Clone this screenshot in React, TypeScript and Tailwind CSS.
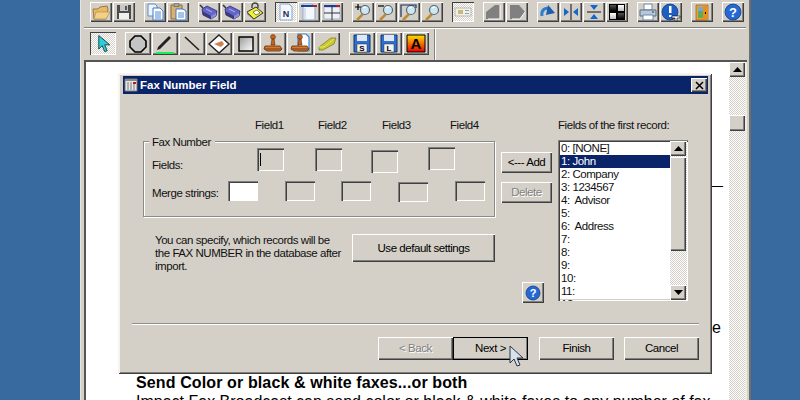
import React from 'react';

const FONT = "font-['Liberation_Sans',Arial,sans-serif]";
const RAISED = 'shadow-[inset_1px_1px_0_#fff,inset_-1px_-1px_0_#404040,inset_-2px_-2px_0_#808080]';
const SUNKEN = 'shadow-[inset_1px_1px_0_#808080,inset_2px_2px_0_#404040,inset_-1px_-1px_0_#fff]';
const DITHER = 'bg-[repeating-conic-gradient(#d4d0c8_0_25%,#ffffff_0_50%)] bg-[length:2px_2px]';

function Ico({ children, w = 22, h = 20 }: { children: React.ReactNode; w?: number; h?: number }) {
  return (
    <svg width={w} height={h} viewBox={`0 0 ${w} ${h}`} className="block">
      {children}
    </svg>
  );
}

function ToolBtn({ children, pressed, wide }: { children: React.ReactNode; pressed?: boolean; wide?: boolean }) {
  const size = wide ? 'w-[26px] h-[23px]' : 'w-[22px] h-[20px]';
  return (
    <div className={`${size} shrink-0 flex items-center justify-center ${pressed ? `${DITHER} shadow-[inset_1px_1px_0_#404040,inset_-1px_-1px_0_#fff]` : `bg-[#d4d0c8] ${RAISED}`}`}>
      {children}
    </div>
  );
}

const Magnifier = ({ sign }: { sign?: '+' | '-' | 'fit' }) => (
  <Ico>
    <path d="M11 12l-6 6" stroke="#c08a30" strokeWidth="2.5" />
    <circle cx="13" cy="8" r="4.500" fill="#cfe6f0" stroke="#4d6b78" strokeWidth="1.2" />
    <path d="M11 6l3-1" stroke="#fff" strokeWidth="1.2" />
    {sign === '+' && <path d="M3 5h6M6 2v6" stroke="#000" strokeWidth="1.2" />}
    {sign === '-' && <path d="M3 4h6" stroke="#000" strokeWidth="1.2" />}
    {sign === 'fit' && <path d="M3 15V3h15v3" fill="none" stroke="#1c2f60" strokeWidth="1.2" />}
  </Ico>
);

const Modem = () => (
  <Ico>
    <path d="M2 3l3 3" stroke="#333" strokeWidth="1.5" />
    <path d="M4 7l5-3 10 5-1 5-5 3-8-4z" fill="#6464c8" stroke="#2a2a66" strokeWidth="0.8" />
    <path d="M5 13l8 4v-3L4 9z" fill="#3a3a78" />
    <path d="M13 17l5-3v-3l-5 3z" fill="#8a8ad8" />
    <path d="M8 7l6 3" stroke="#b4b4ee" />
  </Ico>
);

const Page = ({ children }: { children?: React.ReactNode }) => (
  <Ico>
    <path d="M5 2h9l3 3v13H5z" fill="#f4f8fc" stroke="#8aa6c8" />
    {children}
  </Ico>
);

const Stamp = ({ page }: { page?: boolean }) => (
  <Ico w={26} h={23}>
    {page && <path d="M11 2h8l3 3v14H11z" fill="#fff" stroke="#3f86d8" strokeWidth="1.2" />}
    <circle cx="13" cy="5" r="2.400" fill="#c8641c" stroke="#5a2a08" strokeWidth="0.6" />
    <path d="M12 7h2l1 6h-4z" fill="#c8641c" stroke="#5a2a08" strokeWidth="0.6" />
    <path d="M5 14h15l2 3-2 2H7l-3-2z" fill="#d9792c" stroke="#5a2a08" strokeWidth="0.8" />
    <path d="M5 17h16" stroke="#7a3a10" />
  </Ico>
);

const Floppy = ({ letter }: { letter: string }) => (
  <Ico w={26} h={23}>
    <path d="M5 3h16v17H5z" fill="#2f6fd0" stroke="#14345f" />
    <path d="M8 3h10v6H8z" fill="#dfe8f4" />
    <path d="M8 12h10v8H8z" fill="#f4f4f4" stroke="#333" strokeWidth="0.5" />
    <text x="13" y="19" textAnchor="middle" fontSize="8" fontWeight="700" fontFamily="Liberation Sans" fill="#000">{letter}</text>
  </Ico>
);

const groupsTop: React.ReactNode[][] = [
  [
    <Ico key="open"><path d="M4 17l-1-10h5l2-2 7-1 1 3-2 10z" fill="#eab968" stroke="#9a7a40" /><path d="M4 17l2-7h14l-4 7z" fill="#f4cf88" stroke="#a8864c" strokeWidth="0.6" /></Ico>,
    <Ico key="save"><path d="M4 3h14v14H4z" fill="#4c4c4c" /><path d="M7 3h8v6H7z" fill="#c8c8c8" /><path d="M6 11h10v6H6z" fill="#efefef" /><path d="M12 4h2v4h-2z" fill="#555" /></Ico>,
  ],
  [
    <Ico key="copy"><path d="M4 2h7l2 2v10H4z" fill="#eef4fb" stroke="#5c8ecc" /><path d="M9 6h7l3 3v9H9z" fill="#fff" stroke="#3f78c4" /><path d="M11 10h6M11 12h6M11 14h6M11 16h6" stroke="#4d86d0" /></Ico>,
    <Ico key="paste"><path d="M4 3h11v14H4z" fill="#d8b070" stroke="#8a6a38" /><path d="M7 1.500h5v3H7z" fill="#a8a8a8" stroke="#555" strokeWidth="0.6" /><path d="M9 7h7l3 2v9H9z" fill="#fff" stroke="#3f78c4" /><path d="M11 11h6M11 13h6M11 15h6" stroke="#4d86d0" /></Ico>,
  ],
  [
    <Modem key="m1" />,
    <Modem key="m2" />,
    <Ico key="m3"><path d="M8 6V4a3 3 0 016 0v2" fill="none" stroke="#444" strokeWidth="1.4" /><path d="M3 10l9-5 7 6-9 6z" fill="#eef030" stroke="#333" /><path d="M9 10l4-2 3 3-4 2z" fill="#fff" stroke="#333" strokeWidth="0.6" /><path d="M3 10v2l7 6v-1z" fill="#777" /></Ico>,
  ],
  [
    <Page key="n"><text x="11" y="15" textAnchor="middle" fontSize="9" fontWeight="700" fontFamily="Liberation Sans" fill="#1c2f60">N</text></Page>,
    <Page key="hdr"><path d="M3 3h16v2H3z" fill="#1c3fa0" /><path d="M15 3h4v2h-4z" fill="#b02020" /><path d="M7 6v11" stroke="#b8c4d4" /></Page>,
    <Ico key="grid"><path d="M3 5h16v12H3z" fill="#eef2f8" stroke="#a8b4c4" /><path d="M3 3h16v2H3z" fill="#1c3fa0" /><path d="M15 3h4v2h-4z" fill="#b02020" /><path d="M11 3v15M3 11h16" stroke="#333" /></Ico>,
  ],
  [<Magnifier key="z1" sign="+" />, <Magnifier key="z2" sign="-" />, <Magnifier key="z3" sign="fit" />, <Magnifier key="z4" />],
  [<Ico key="pic"><path d="M3 6h16v8H3z" fill="#f0f0e4" stroke="#999" strokeWidth="0.6" /><path d="M6 8h5v4H6z" fill="#c8b880" /><path d="M13 8h4v1h-4zM13 11h4v1h-4z" fill="#8c9cc0" /></Ico>],
  [
    <Ico key="p1"><path d="M3 10l9-7h5v14H3z" fill="#808080" /><path d="M17 3v14H5" fill="none" stroke="#fff" /></Ico>,
    <Ico key="p2"><path d="M4 3h9l6 7-5 7H4z" fill="#808080" /><path d="M19 10l-5 7H6" fill="none" stroke="#fff" /></Ico>,
  ],
  [
    <Ico key="redo"><path d="M5 14c-1-6 3-9 8-7" fill="none" stroke="#2d7fd0" strokeWidth="3" /><path d="M11 3l7 8-9 2z" fill="#1d5fb0" /></Ico>,
    <Ico key="hflip"><path d="M11 2v16" stroke="#111" /><path d="M9 10L4 6v8zM13 10l5-4v8z" fill="#1668c8" /></Ico>,
    <Ico key="vflip"><path d="M4 10h14" stroke="#111" /><path d="M11 8L7 3h8zM11 12l-4 5h8z" fill="#1668c8" /></Ico>,
    <Ico key="tile">
      <defs>
        <linearGradient id="tileA" x1="0" y1="0" x2="0" y2="1"><stop offset="0" stopColor="#555" /><stop offset="1" stopColor="#000" /></linearGradient>
        <linearGradient id="tileB" x1="0" y1="0" x2="0" y2="1"><stop offset="0" stopColor="#fff" /><stop offset="1" stopColor="#bbb" /></linearGradient>
      </defs>
      <path d="M3 2h16v16H3z" fill="#000" />
      <path d="M4 3h6v6H4z" fill="url(#tileA)" /><path d="M12 3h6v6h-6z" fill="url(#tileB)" />
      <path d="M4 11h6v6H4z" fill="url(#tileB)" /><path d="M12 11h6v6h-6z" fill="url(#tileA)" />
    </Ico>,
  ],
  [
    <Ico key="print"><path d="M7 2h8v6H7z" fill="#fff" stroke="#6a8ab0" /><path d="M3 8h16v6H3z" fill="#b8c8d8" stroke="#5a6a80" /><path d="M6 13h10v5H6z" fill="#fff" stroke="#6a8ab0" /><path d="M15 10h2" stroke="#333" /></Ico>,
    <Ico key="bang"><circle cx="10" cy="10" r="8" fill="#1f5fc4" stroke="#123c80" strokeWidth="0.8" /><path d="M9 4h2.500v7H9zM9 13h2.500v2H9z" fill="#fff" /><path d="M12 14h8v2h-3v3h-2v-3h-3z" fill="#fff" stroke="#000" strokeWidth="0.6" /></Ico>,
  ],
  [<Ico key="door"><path d="M5 3h12v15H5z" fill="#f0a030" stroke="#7a5010" strokeWidth="0.6" /><path d="M7 5h5v11H7z" fill="#5fa860" /><path d="M7 5h5v4H7z" fill="#70a8e0" /><path d="M12 3l5 1v14l-5-1z" fill="#e89020" /><path d="M14 10h1v2h-1z" fill="#000" /></Ico>],
  [<Ico key="help"><circle cx="11" cy="10" r="8" fill="#2468d4" stroke="#103c88" strokeWidth="0.8" /><text x="11" y="15" textAnchor="middle" fontSize="13" fontWeight="700" fontFamily="Liberation Sans" fill="#fff">?</text></Ico>],
];

const Cursor = ({ className, size = 26 }: { className?: string; size?: number }) => (
  <svg width={size} height={size} viewBox="0 0 26 26" className={className}>
    <path d="M8 3v16l4-4 3 7 3-1-3-7h6z" fill="#28d0d8" stroke="#0c2f3a" />
  </svg>
);

const groupsBottom: React.ReactNode[][] = [
  [
    <Ico key="oct" w={26} h={23}><path d="M10 4h6l5 5v6l-5 5h-6l-5-5V9z" fill="#c4c4c4" stroke="#000" strokeWidth="1.6" /></Ico>,
    <Ico key="pen" w={26} h={23}><path d="M6 15L17 4l2 2L8 17l-3 1z" fill="#222" /><path d="M4 20h18v2H4z" fill="#16f050" /></Ico>,
    <Ico key="line" w={26} h={23}><path d="M6 5l14 13" stroke="#222" strokeWidth="1.6" /></Ico>,
    <Ico key="dia" w={26} h={23}><path d="M13 3l10 9-10 9L3 12z" fill="#fff" stroke="#222" strokeWidth="1.4" /><path d="M8 12l8-3 2 3-3 3z" fill="#d08050" /></Ico>,
    <Ico key="sq" w={26} h={23}>
      <defs><linearGradient id="sqFill" x1="0" y1="0" x2="1" y2="1"><stop offset="0" stopColor="#999" /><stop offset="1" stopColor="#fff" /></linearGradient></defs>
      <path d="M6 5h14v14H6z" fill="url(#sqFill)" stroke="#000" strokeWidth="1.4" />
    </Ico>,
    <Stamp key="s1" />,
    <Stamp key="s2" page />,
    <Ico key="er" w={26} h={23}><path d="M5 15L17 6h5l-2 6-11 6H5z" fill="#c8c830" stroke="#6a6a10" strokeWidth="0.6" /><path d="M5 15h5l10-8" fill="none" stroke="#e8e860" /></Ico>,
  ],
  [
    <Floppy key="fs" letter="S" />,
    <Floppy key="fl" letter="L" />,
    <Ico key="a" w={26} h={23}>
      <defs><linearGradient id="aFill" x1="0" y1="0" x2="0" y2="1"><stop offset="0" stopColor="#ffe000" /><stop offset="1" stopColor="#e80000" /></linearGradient></defs>
      <path d="M4 3h18v17H4z" fill="url(#aFill)" stroke="#000" />
      <text x="13" y="17" textAnchor="middle" fontSize="15" fontWeight="700" fontFamily="Liberation Sans" fill="#000">A</text>
    </Ico>,
  ],
];

function Field({ w, h, className = '', white, children }: { w: string; h: string; className?: string; white?: boolean; children?: React.ReactNode }) {
  return <div className={`${w} ${h} shrink-0 ${white ? 'bg-white' : 'bg-[#d4d0c8]'} ${SUNKEN} ${className}`}>{children}</div>;
}

function DlgBtn({ label, disabled, className = '' }: { label: string; disabled?: boolean; className?: string }) {
  return (
    <div className={`flex items-center justify-center shrink-0 bg-[#d4d0c8] ${RAISED} ${disabled ? 'text-[#808080] [text-shadow:1px_1px_0_#fff]' : 'text-black'} ${className}`}>
      {label}
    </div>
  );
}

function ArrowBtn({ up }: { up?: boolean }) {
  return (
    <div className={`w-[16px] h-[15px] shrink-0 flex items-center justify-center bg-[#d4d0c8] ${RAISED}`}>
      <svg width="9" height="5" viewBox="0 0 9 5"><path d={up ? 'M4.500 0L9 5H0z' : 'M0 0h9L4.500 5z'} fill="#000" /></svg>
    </div>
  );
}

const records = ['0: [NONE]', '1: John', '2: Company', '3: 1234567', '4:  Advisor', '5:', '6:  Address', '7:', '8:', '9:', '10:', '11:', '12:'];

function FaxDialog() {
  return (
    <div className="absolute left-[118px] top-[73px] w-[593px] h-[300px] flex flex-col bg-[#d4d0c8] border-t-2 border-l-2 border-t-[#f4f4f0] border-l-[#f4f4f0] shadow-[inset_-1px_-1px_0_#808080,1px_1px_0_#404040] text-[11.5px] leading-[13px] tracking-[-0.45px] text-[#111]">
      <div className="mt-[1px] mx-[3px] h-[18px] shrink-0 bg-[#0a246a] flex items-center justify-between pl-[1px] pr-[1px]">
        <div className="flex items-center gap-[2px]">
          <svg width="14" height="14" viewBox="0 0 14 14"><path d="M1 1h12v12H1z" fill="#e8e8e8" stroke="#777" /><path d="M1 1h12v2H1z" fill="#888" /><path d="M4 4v8M7 4v8M10 4v8" stroke="#777" /><path d="M9 4h3v2H9z" fill="#b02020" /></svg>
          <span className="text-white font-bold text-[11.5px] tracking-normal">Fax Number Field</span>
        </div>
        <div className={`w-[16px] h-[14px] flex items-center justify-center bg-[#d4d0c8] ${RAISED}`}>
          <svg width="9" height="9" viewBox="0 0 9 9"><path d="M1 1l7 7M8 1L1 8" stroke="#000" strokeWidth="1.5" /></svg>
        </div>
      </div>

      <div className="flex pl-[23px] pt-[25px] h-[229px] shrink-0">
        <div className="w-[352px] shrink-0">
          <div className="flex h-[13px]">
            <span className="ml-[112px] w-[63px]">Field1</span>
            <span className="w-[64px]">Field2</span>
            <span className="w-[68px]">Field3</span>
            <span>Field4</span>
          </div>
          <div className="relative mt-[9px] h-[76px] border border-[#8a8a86] shadow-[1px_1px_0_#fff,inset_1px_1px_0_#fff] flex flex-col">
            <span className="absolute left-[5px] -top-[6px] bg-[#d4d0c8] pl-[3px] pr-[4px]">Fax Number</span>
            <div className="flex items-start h-[34px]">
              <span className="ml-[8px] mt-[17px] w-[105px]">Fields:</span>
              <Field w="w-[27px]" h="h-[23px]" className="mt-[6px] flex items-center pl-[3px]"><div className="w-[1px] h-[13px] bg-black" /></Field>
              <Field w="w-[27px]" h="h-[23px]" className="ml-[31px] mt-[6px]" />
              <Field w="w-[27px]" h="h-[23px]" className="ml-[29px] mt-[8px]" />
              <Field w="w-[27px]" h="h-[23px]" className="ml-[30px] mt-[5px]" />
            </div>
            <div className="flex items-start mt-[5px]">
              <span className="ml-[8px] mt-[6px] w-[76px] whitespace-nowrap">Merge strings:</span>
              <Field w="w-[30px]" h="h-[20px]" white />
              <Field w="w-[30px]" h="h-[20px]" className="ml-[27px]" />
              <Field w="w-[30px]" h="h-[20px]" className="ml-[26px]" />
              <Field w="w-[30px]" h="h-[20px]" className="ml-[27px] mt-[1px]" />
              <Field w="w-[30px]" h="h-[20px]" className="ml-[27px]" />
            </div>
          </div>
          <div className="flex mt-[17px]">
            <p className="ml-[12px] w-[198px] pr-[6px] leading-[13px]">You can specify, which records will be the FAX NUMBER in the database after import.</p>
            <DlgBtn label="Use default settings" className="w-[143px] h-[28px]" />
          </div>
        </div>

        <div className="w-[51px] ml-[6px] shrink-0 pt-[33px] flex flex-col">
          <DlgBtn label="<--- Add" className="w-[51px] h-[21px]" />
          <DlgBtn label="Delete" disabled className="w-[51px] h-[21px] mt-[9px]" />
          <div className={`ml-[21px] mt-[79px] w-[22px] h-[21px] flex items-center justify-center bg-[#d4d0c8] ${RAISED}`}>
            <svg width="16" height="16" viewBox="0 0 16 16"><circle cx="8" cy="8" r="7" fill="#2468d4" stroke="#103c88" strokeWidth="0.8" /><text x="8" y="12" textAnchor="middle" fontSize="11" fontWeight="700" fontFamily="Liberation Sans" fill="#fff">?</text></svg>
          </div>
        </div>

        <div className="w-[130px] ml-[6px] shrink-0">
          <div className="h-[13px]">Fields of the first record:</div>
          <div className="mt-[8px] h-[161px] bg-white flex overflow-hidden shadow-[inset_1px_1px_0_#808080,inset_2px_2px_0_#404040,inset_-1px_-1px_0_#fff,inset_-2px_-2px_0_#d4d0c8]">
            <div className="flex-1 min-w-0 pt-[2px] pl-[2px] overflow-hidden">
              {records.map((r, i) => (
                <div key={r} className={`h-[13px] pl-[1px] whitespace-pre ${i === 1 ? 'bg-[#0a246a] text-white' : ''}`}>{r}</div>
              ))}
            </div>
            <div className={`w-[17px] shrink-0 mr-[1px] my-[1px] flex flex-col ${DITHER}`}>
              <ArrowBtn up />
              <div className={`w-[16px] h-[94px] mt-[1px] bg-[#d4d0c8] ${RAISED}`} />
              <div className="flex-1" />
              <ArrowBtn />
            </div>
          </div>
        </div>
      </div>

      <div className="mx-[12px] h-[2px] shrink-0 bg-[#8f8f8b] border-b border-white" />
      <div className="flex items-start pl-[258px] pt-[12px] relative">
        <DlgBtn label="< Back" disabled className="w-[75px] h-[23px]" />
        <DlgBtn label="Next >" className="w-[75px] h-[23px] outline outline-1 -outline-offset-1 outline-black" />
        <DlgBtn label="Finish" className="w-[75px] h-[23px] ml-[11px]" />
        <DlgBtn label="Cancel" className="w-[75px] h-[23px] ml-[10px]" />
        <svg width="18" height="24" viewBox="0 0 18 24" className="absolute left-[388px] top-[19px]">
          <path d="M2 2v17l4-4 3 7 3-1-3-7h6z" fill="#d8e0ec" stroke="#2a3444" strokeWidth="1" />
        </svg>
      </div>
    </div>
  );
}

export default function App() {
  return (
    <div className={`relative w-[800px] h-[400px] overflow-hidden bg-[#38699f] pl-[80px] ${FONT}`}>
      <div className="w-[671px] h-full flex flex-col bg-[#d4d0c8] border-l border-l-[#e6e4de] border-r-2 border-r-[#6e6e6a]">
        <div className="h-[27px] shrink-0 flex pl-[9px] pt-[2px] gap-[9px] border-b-0">
          {groupsTop.map((group, i) => (
            <div key={i} className="flex gap-[1px]">
              {group.map((icon, j) => (
                <ToolBtn key={j} pressed={(i === 3 && j === 0) || i === 5}>{icon}</ToolBtn>
              ))}
            </div>
          ))}
        </div>
        <div className="mx-[3px] h-[2px] shrink-0 bg-[#808080] border-b border-white" />
        <div className="h-[31px] shrink-0 flex items-start pl-[9px] pt-[3px] gap-[9px]">
          <ToolBtn wide pressed><Cursor size={22} /></ToolBtn>
          {groupsBottom.map((group, i) => (
            <div key={i} className="flex gap-[1px]">
              {group.map((icon, j) => (
                <ToolBtn key={j} wide>{icon}</ToolBtn>
              ))}
            </div>
          ))}
          <div className="ml-[-4px] w-[2px] h-[31px] -mt-[3px] bg-[#808080] border-r border-white" />
        </div>
        <div className="flex-1 min-h-0 ml-[3px] mr-[2px] flex border-t-2 border-l-2 border-t-[#555] border-l-[#555] bg-white overflow-hidden">
          <div className="flex-1 min-w-0 flex flex-col pl-[50px] pr-[6px] text-black">
            <div className="mt-[116px] text-right text-[14px] leading-[14px]">—</div>
            <div className="mt-[127px] text-right text-[16px] leading-[18px] h-[18px] mr-[2px]">e</div>
            <h2 className="mt-[37px] font-bold text-[16px] tracking-[0.12px] leading-[18px] whitespace-nowrap">Send Color or black &amp; white faxes...or both</h2>
            <p className="text-[16px] leading-[18px] whitespace-nowrap mt-[1px]">Impact Fax Broadcast can send color or black &amp; white faxes to any number of fax</p>
          </div>
          <div className={`w-[16px] shrink-0 flex flex-col ${DITHER}`}>
            <div className={`w-[16px] h-[15px] flex items-center justify-center bg-[#d4d0c8] ${RAISED}`}>
              <svg width="9" height="5" viewBox="0 0 9 5"><path d="M4.500 0L9 5H0z" fill="#000" /></svg>
            </div>
            <div className={`mt-[38px] w-[16px] h-[16px] bg-[#d4d0c8] ${RAISED}`} />
          </div>
          <div className="w-[2px] shrink-0 bg-[#ecebe6]" />
        </div>
      </div>
      <FaxDialog />
    </div>
  );
}
